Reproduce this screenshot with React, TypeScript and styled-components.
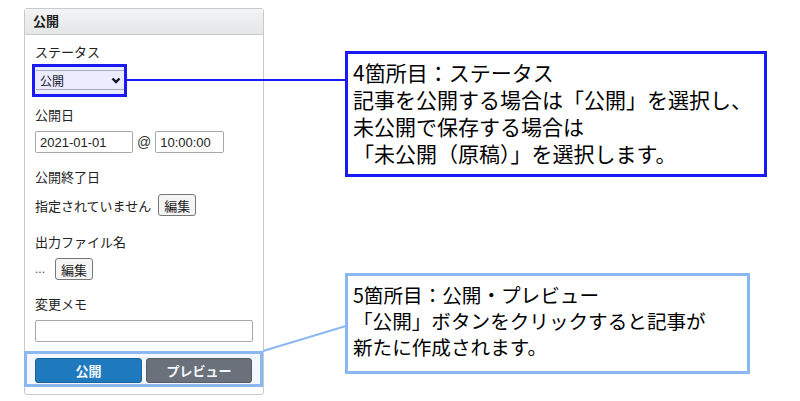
import styled, { createGlobalStyle } from 'styled-components'

// 公開パネル + 注釈（ステータス / 公開・プレビュー）
const GlobalStyle = createGlobalStyle`
    body {
        margin: 0;
        background: #fff;
        font-family: "Liberation Sans", "Noto Sans CJK JP", sans-serif;
        color: #222;
    }
`

type Tone = 'strong' | 'soft'

const toneColor = (tone: Tone) => (tone === 'strong' ? '#1a1af5' : '#8cb8f2')
const toneFill = (tone: Tone) => (tone === 'strong' ? 'rgba(40, 40, 255, 0.09)' : 'rgba(120, 170, 240, 0.08)')

function App() {
    return (
        <Stage>
            <GlobalStyle />
            <Panel>
                <PanelHeader>公開</PanelHeader>
                <PanelBody>
                    <Field $mt={9}>
                        <Label $mb={8}>ステータス</Label>
                        <SelectBox>
                            <span>公開</span>
                            <svg width="10" height="7" viewBox="0 0 10 7">
                                <path d="M1.5 1.5 L5 5 L8.5 1.5" fill="none" stroke="#111" strokeWidth="2.4" />
                            </svg>
                        </SelectBox>
                    </Field>
                    <Field $mt={17}>
                        <Label>公開日</Label>
                        <Row>
                            <TextInput $w={98} defaultValue="2021-01-01" readOnly />
                            <At>@</At>
                            <TextInput $w={69} defaultValue="10:00:00" readOnly />
                        </Row>
                    </Field>
                    <Field $mt={16}>
                        <Label $mb={7}>公開終了日</Label>
                        <Row $gap={7}>
                            <span>指定されていません</span>
                            <SmallButton>編集</SmallButton>
                        </Row>
                    </Field>
                    <Field $mt={18}>
                        <Label>出力ファイル名</Label>
                        <Row $gap={10}>
                            <Dots>...</Dots>
                            <SmallButton>編集</SmallButton>
                        </Row>
                    </Field>
                    <Field $mt={16}>
                        <Label>変更メモ</Label>
                        <TextInput $w={218} readOnly />
                    </Field>
                </PanelBody>
                <Footer>
                    <ActionButton $variant="primary">公開</ActionButton>
                    <ActionButton $variant="secondary">プレビュー</ActionButton>
                </Footer>
            </Panel>

            {/* 注釈 */}
            <Highlight $tone="strong" $x={32} $y={64} $w={95} $h={33} />
            <Highlight $tone="soft" $x={24} $y={351} $w={239} $h={36} />
            <Connectors width="800" height="401">
                <line x1="127" y1="80" x2="346" y2="80" stroke="#1a1af5" strokeWidth="2" />
                <line x1="263" y1="351" x2="346" y2="326" stroke="#8cb8f2" strokeWidth="2" />
            </Connectors>
            <Callout $tone="strong" $x={345} $y={51} $w={422} $h={126} $size={21} $lh={27}>
                4箇所目：ステータス
                <br />
                記事を公開する場合は「公開」を選択し、
                <br />
                未公開で保存する場合は
                <br />
                「未公開（原稿）」を選択します。
            </Callout>
            <Callout $tone="soft" $x={345} $y={273} $w={405} $h={101} $size={19.6} $lh={26}>
                5箇所目：公開・プレビュー
                <br />
                「公開」ボタンをクリックすると記事が
                <br />
                新たに作成されます。
            </Callout>
        </Stage>
    )
}

const Stage = styled.div`
    position: relative;
    width: 800px;
    height: 401px;
    overflow: hidden;
    padding-top: 8px;
    box-sizing: border-box;
`

const Panel = styled.section`
    margin-left: 24px;
    width: 240px;
    box-sizing: border-box;
    border: 1px solid #c6cacd;
    border-radius: 3px;
    background: #fff;
    padding-bottom: 7px;
    font-size: 13px;
`

const PanelHeader = styled.h2`
    margin: 0;
    height: 25px;
    line-height: 25px;
    padding-left: 8px;
    font-size: 13px;
    font-weight: bold;
    color: #222;
    background: linear-gradient(#f3f4f4, #e4e6e7);
    border-bottom: 1px solid #c6cacd;
`

const PanelBody = styled.div`
    padding: 0 10px;
    display: flex;
    flex-direction: column;
`

const Field = styled.div<{ $mt: number }>`
    margin-top: ${(p) => p.$mt}px;
    display: flex;
    flex-direction: column;
    align-items: flex-start;
`

const Label = styled.div<{ $mb?: number }>`
    height: 18px;
    line-height: 18px;
    margin-bottom: ${(p) => p.$mb ?? 6}px;
    color: #222;
`

const SelectBox = styled.div`
    margin-left: 1px;
    width: 88px;
    height: 20px;
    box-sizing: border-box;
    border-top: 1px solid #b4b4c4;
    border-bottom: 1px solid #b4b4c4;
    background: #fff;
    display: flex;
    align-items: center;
    justify-content: space-between;
    padding: 0 3px 0 4px;
    font-size: 12px;
    color: #111;
`

const Row = styled.div<{ $gap?: number }>`
    display: flex;
    align-items: center;
    gap: ${(p) => p.$gap ?? 4}px;
    height: 22px;
`

const TextInput = styled.input<{ $w: number }>`
    width: ${(p) => p.$w}px;
    height: 22px;
    box-sizing: border-box;
    margin: 0;
    border: 1px solid #a8a8a8;
    border-radius: 2px;
    padding: 0 4px;
    font-family: "Liberation Sans", "Noto Sans CJK JP", sans-serif;
    font-size: 13px;
    color: #222;
    background: #fff;
    outline: none;
`

const At = styled.span`
    font-size: 14px;
    color: #333;
`

const Dots = styled.span`
    color: #444;
    font-size: 12px;
`

const SmallButton = styled.button`
    height: 22px;
    padding: 0 5px;
    margin: 0;
    border: 1px solid #777;
    border-radius: 3px;
    background: #f5f5f5;
    font-family: "Liberation Sans", "Noto Sans CJK JP", sans-serif;
    font-size: 13px;
    color: #222;
`

const Footer = styled.div`
    margin-top: 9px;
    padding: 7px 10px 4px;
    display: grid;
    grid-template-columns: 107px 106px;
    gap: 4px;
`

const ActionButton = styled.button<{ $variant: 'primary' | 'secondary' }>`
    height: 25px;
    margin: 0;
    border-radius: 3px;
    border: 1px solid ${(p) => (p.$variant === 'primary' ? '#0e5f95' : '#55575a')};
    background: ${(p) => (p.$variant === 'primary' ? '#1777b9' : '#6b6d70')};
    color: #fff;
    font-family: "Liberation Sans", "Noto Sans CJK JP", sans-serif;
    font-size: 13px;
    font-weight: bold;
`

const Highlight = styled.div<{ $tone: Tone; $x: number; $y: number; $w: number; $h: number }>`
    position: absolute;
    left: ${(p) => p.$x}px;
    top: ${(p) => p.$y}px;
    width: ${(p) => p.$w}px;
    height: ${(p) => p.$h}px;
    box-sizing: border-box;
    border: 3px solid ${(p) => toneColor(p.$tone)};
    background: ${(p) => toneFill(p.$tone)};
`

const Connectors = styled.svg`
    position: absolute;
    left: 0;
    top: 0;
    pointer-events: none;
`

const Callout = styled.div<{ $tone: Tone; $x: number; $y: number; $w: number; $h: number; $size: number; $lh: number }>`
    position: absolute;
    left: ${(p) => p.$x}px;
    top: ${(p) => p.$y}px;
    width: ${(p) => p.$w}px;
    height: ${(p) => p.$h}px;
    box-sizing: border-box;
    border: 3px solid ${(p) => toneColor(p.$tone)};
    background: #fff;
    padding: ${(p) => (p.$tone === 'strong' ? 5 : 6)}px 0 0 5px;
    font-family: "Noto Sans CJK JP", sans-serif;
    font-size: ${(p) => p.$size}px;
    line-height: ${(p) => p.$lh}px;
    color: #000;
    white-space: nowrap;
`

export default App
